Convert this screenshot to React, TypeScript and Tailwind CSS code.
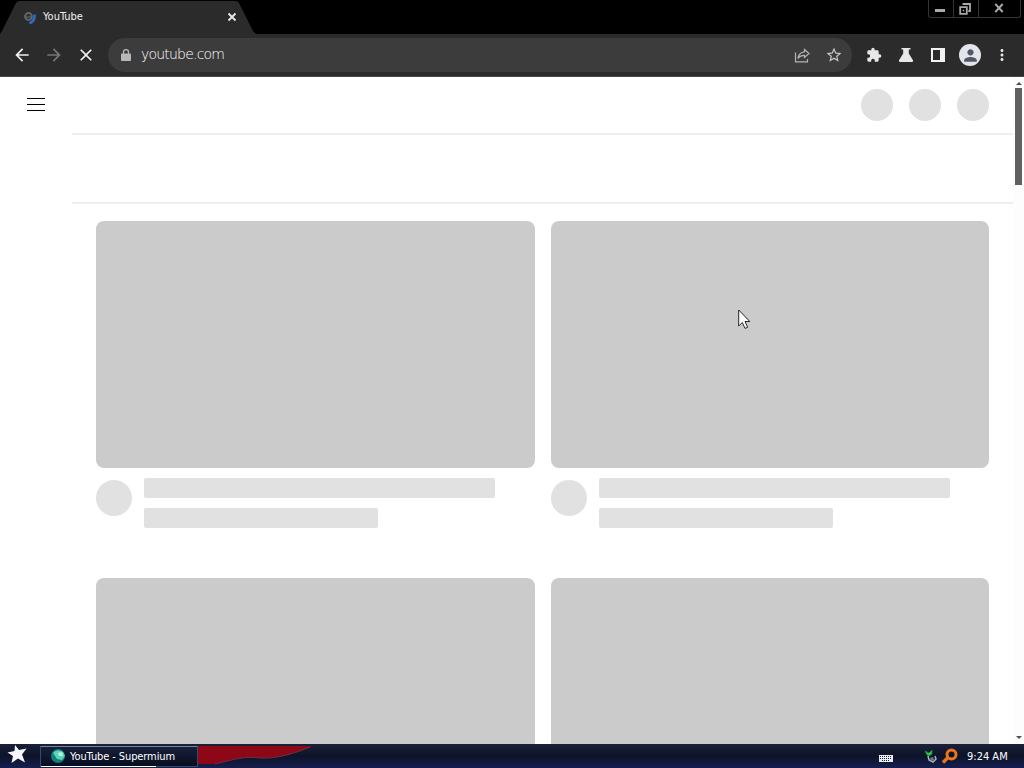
import { MdArrowBack, MdArrowForward, MdClose, MdExtension, MdMoreVert, MdPerson, MdStarBorder } from "react-icons/md";

const TabStrip = () => (
  <div className="flex h-[34px] justify-between bg-black">
    <div className="relative h-[34px] w-[256px]">
      <svg className="absolute inset-0" width="256" height="34" viewBox="0 0 256 34">
        <path d="M0 34L2 31L16 3Q17 1 20 1H235Q238 1 239 3L253 31L256 34Z" fill="#2b2b2b" />
      </svg>
      <div className="relative flex h-[34px] items-center pl-[23px]">
        <svg className="mt-px" width="14" height="14" viewBox="0 0 14 14">
          <circle cx="5.5" cy="5.5" r="3.4" fill="none" stroke="#60646b" strokeWidth="2" />
          <path d="M3 6h5" stroke="#60646b" strokeWidth="1.2" />
          <path d="M11.6 3.5Q12.2 10 6.5 12.2" fill="none" stroke="#2f6cc5" strokeWidth="2.6" />
        </svg>
        <span className="mt-px ml-[6px] w-[180px] text-[11px] text-[#f1f1f1]">YouTube</span>
        <svg className="ml-[4px]" width="10" height="10" viewBox="0 0 10 10">
          <path d="M1.5 1.5l7 7M8.5 1.5l-7 7" stroke="#e8e8e8" strokeWidth="1.9" />
        </svg>
      </div>
    </div>
    <div className="mr-[3px] flex h-[18px] rounded-b-[3px] border border-t-0 border-[#353535]">
      <div className="flex w-[25px] justify-center border-r border-[#353535]">
        <div className="mt-[9px] mr-[2px] h-[3px] w-[10px] bg-[#a8a8a8]" />
      </div>
      <div className="flex w-[25px] justify-center border-r border-[#353535]">
        <svg className="mt-[3px] mr-[3px]" width="12" height="12" viewBox="0 0 12 12">
          <path d="M3.5 1H11V8H9.3" fill="none" stroke="#a8a8a8" strokeWidth="1.8" />
          <path d="M1.2 4.2H7.8V10.8H1.2Z" fill="none" stroke="#a8a8a8" strokeWidth="1.8" />
          <path d="M3.8 6.8h1.5v1.5H3.8z" fill="#a8a8a8" />
        </svg>
      </div>
      <div className="flex w-[41px] justify-center">
        <svg className="mt-[3px] mr-[2px]" width="10" height="10" viewBox="0 0 10 10">
          <path d="M1.3 1l7.4 8M8.7 1L1.3 9" stroke="#a8a8a8" strokeWidth="1.9" />
        </svg>
      </div>
    </div>
  </div>
);

const Toolbar = () => (
  <div className="flex h-[43px] items-center border-b border-[#48464a] bg-[#2b2b2b] pl-[12px]">
    <MdArrowBack className="size-5 text-[#f1f1f1]" />
    <MdArrowForward className="ml-3 size-5 text-[#777777]" />
    <MdClose className="ml-3 size-5 text-[#f1f1f1]" />
    <div className="ml-3 flex h-[34px] w-[744px] items-center rounded-full bg-[#3c3c3c] pl-[13px]">
      <svg width="10" height="12" viewBox="0 0 10 12">
        <path d="M1 4.5H9Q10 4.5 10 5.5V11Q10 12 9 12H1Q0 12 0 11V5.5Q0 4.5 1 4.5Z" fill="#b8b8b8" />
        <path d="M2.5 5V3Q2.5 .7 5 .7T7.5 3V5" fill="none" stroke="#b8b8b8" strokeWidth="1.3" />
      </svg>
      <span className="mb-[2px] ml-[10px] flex-1 font-['DejaVu_Sans',sans-serif] text-[14px] leading-none font-extralight tracking-[-0.8px] text-white">
        youtube.com
      </span>
      <svg className="mt-[2px]" width="18" height="18" viewBox="0 0 18 18" fill="none" stroke="#b5b5b5" strokeWidth="1.2">
        <path d="M2.5 5.5V14.8H14.5V12" />
        <path d="M11.5 2.5L16 6.5L11.5 10.5V8.3C8.5 8.3 6.5 9.2 5 11.5C5.4 7.9 7.6 5.2 11.5 4.8Z" />
      </svg>
      <MdStarBorder className="mr-[9px] ml-[14px] size-[18px] text-[#c8c8c8]" />
    </div>
    <MdExtension className="ml-[14px] size-4 text-[#e8e8e8]" />
    <svg className="ml-[15px]" width="18" height="18" viewBox="0 0 18 18">
      <path d="M4.5 2H13.5V3.5H11.8V7.5L16 14.3Q16.6 16 15 16H3Q1.4 16 2 14.3L6.2 7.5V3.5H4.5Z" fill="#e8e8e8" />
    </svg>
    <svg className="ml-[14px]" width="18" height="18" viewBox="0 0 18 18">
      <path d="M2 2H16V16H2Z" fill="#f1f1f1" />
      <path d="M4 4H11V14H4Z" fill="#2b2b2b" />
    </svg>
    <div className="ml-[12px] flex size-[22px] items-center justify-center rounded-full bg-[#e3e5ec]">
      <MdPerson className="size-[19px] text-[#515764]" />
    </div>
    <MdMoreVert className="ml-[12px] size-[18px] text-[#e8e8e8]" />
  </div>
);

const VideoSkeleton = () => (
  <div className="h-[357px]">
    <div className="h-[247px] rounded-lg bg-[#cbcbcb]" />
    <div className="flex pt-[10px]">
      <div className="mt-[2px] size-9 shrink-0 rounded-full bg-[#e1e1e1]" />
      <div className="ml-3 flex-1">
        <div className="h-5 w-[351px] rounded-xs bg-[#e1e1e1]" />
        <div className="mt-[10px] h-5 w-[234px] rounded-xs bg-[#e1e1e1]" />
      </div>
    </div>
  </div>
);

const Page = () => (
  <div className="flex h-[667px] overflow-hidden bg-white">
    <div className="w-[72px] shrink-0 pt-[21px] pl-[27px]">
      <div className="flex w-[18px] flex-col gap-[5px]">
        <div className="h-px bg-black" />
        <div className="h-px bg-black" />
        <div className="h-px bg-black" />
      </div>
    </div>
    <div className="w-[941px]">
      <div className="flex h-[58px] justify-end gap-4 border-b-2 border-[#eeeeee] pt-3 pr-[24px]">
        <div className="size-8 rounded-full bg-[#e1e1e1]" />
        <div className="size-8 rounded-full bg-[#e1e1e1]" />
        <div className="size-8 rounded-full bg-[#e1e1e1]" />
      </div>
      <div className="h-[69px] border-b-2 border-[#eeeeee]" />
      <div className="grid grid-cols-2 gap-x-4 pt-[17px] pr-[24px] pl-6">
        {[0, 1, 2, 3].map((i) => (
          <VideoSkeleton key={i} />
        ))}
      </div>
    </div>
    <div className="flex w-[11px] flex-col items-center bg-[#fdfdfd] pt-[5px]">
      <svg width="6" height="3" viewBox="0 0 6 3">
        <path d="M3 0L6 3H0Z" fill="#505050" />
      </svg>
      <div className="mt-[3px] h-[97px] w-[7px] bg-[#606060]" />
      <svg className="mt-auto mb-[5px]" width="6" height="3" viewBox="0 0 6 3">
        <path d="M0 0H6L3 3Z" fill="#505050" />
      </svg>
    </div>
  </div>
);

const Taskbar = () => (
  <div className="relative flex h-6 items-center bg-linear-to-b from-[#1a2138] via-[#0d1429] to-[#161e50] text-[11px] text-white">
    <svg className="absolute top-0 left-[150px]" width="165" height="24" viewBox="0 0 165 24">
      <path d="M48 2H162C145 9 128 15 110 14C96 12 85 15 65 20H0Z" fill="#8d0717" />
      <path d="M160 3C145 9 128 15 110 14C96 12 85 15 65 20" fill="none" stroke="#6c3040" strokeWidth="1" />
    </svg>
    <svg className="relative mb-[5px] ml-[7px]" width="20" height="20" viewBox="0 0 20 20">
      <path d="M8 1L12 6L19.5 4.5L15 10.5L18 18.5L11 14.5L4.5 19L6 12L.5 8.5L7.5 7Z" fill="#f7f7ff" />
    </svg>
    <div className="relative ml-[13px] flex h-[21px] w-[158px] items-center border border-[#344c6b] border-t-[#7185a0] bg-linear-to-b from-[#17203a] to-[#080e20] pl-[9px]">
      <svg width="16" height="16" viewBox="0 0 16 16">
        <circle cx="8" cy="8" r="7" fill="#147e7b" />
        <path d="M3 5Q7 0 13 4L15 8L12 12L7 11L5 8Z" fill="#5ad5b5" />
        <path d="M8 5L12 4L13 8L9 8Z" fill="#b7f3df" />
      </svg>
      <span className="mt-[2px] ml-[4px] tracking-[-0.1px] whitespace-nowrap">YouTube - Supermium</span>
      <div className="absolute -bottom-px left-0 h-px w-[115px] bg-white" />
    </div>
    <div className="relative ml-auto flex items-center">
      <svg className="mt-[4px]" width="14" height="7" viewBox="0 0 14 7">
        <path d="M0 0H14V7H0Z" fill="#ececec" />
        <path d="M1 1.5H13M1 3.5H13M3 5.5H11" stroke="#18233d" strokeWidth="1" strokeDasharray="1 1" />
      </svg>
      <svg className="ml-[31px]" width="15" height="15" viewBox="0 0 15 15">
        <path d="M1 2L5 4L8 1L8 5L5 7L3 6Z" fill="#35c64b" stroke="#168534" strokeWidth=".8" />
        <path d="M4 7L5 11L9 13L12 10L11 7" fill="none" stroke="#a7b3b5" strokeWidth="1.5" />
        <path d="M6 9L9 8L10 11L7 12Z" fill="#737d80" />
      </svg>
      <svg className="ml-[2px]" width="17" height="17" viewBox="0 0 17 17">
        <circle cx="10.5" cy="6.5" r="4.5" fill="none" stroke="#ed741d" strokeWidth="3" />
        <path d="M7 9.5L2 14.5" stroke="#ed741d" strokeWidth="3.4" />
      </svg>
      <span className="mt-[2px] ml-[9px] w-[57px] whitespace-nowrap">9:24 AM</span>
    </div>
  </div>
);

const Cursor = () => (
  <svg className="absolute top-[309px] left-[738px]" width="13" height="21" viewBox="0 0 13 21">
    <path d="M.7 1V17L4.3 13.5L7 19.4L9.6 18.3L7 12.5H11.8Z" fill="#fff" stroke="#252525" strokeWidth="1" />
  </svg>
);

const App = () => {
  return (
    <div className="relative h-[768px] w-[1024px] overflow-hidden font-['DejaVu_Sans_Condensed','DejaVu_Sans',sans-serif]">
      <TabStrip />
      <Toolbar />
      <Page />
      <Taskbar />
      <Cursor />
    </div>
  );
};

export default App;
